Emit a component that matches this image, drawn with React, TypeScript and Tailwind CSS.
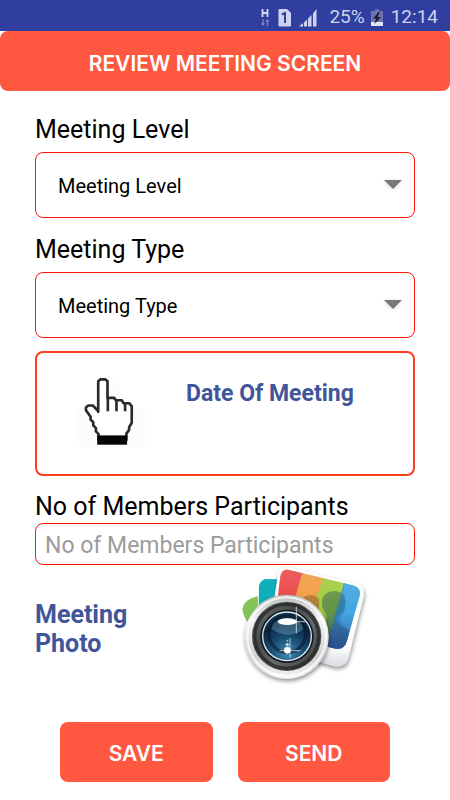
import { useState } from "react";

const SignalIcons = () => (
  <div className="flex items-center gap-2">
    <svg className="h-[19px] w-[9px]" viewBox="0 0 9 19" fill="none" aria-hidden="true">
      <path d="M1.5 1v8M6.5 1v8M1.5 5h5" stroke="#d5d8f0" strokeWidth="1.8" />
      <path d="M2 11v6M0.5 15l1.5 2 1.5-2M6.500 18v-6M5 14l1.500-2L8 14" stroke="#7f87c6" strokeWidth="1.2" />
    </svg>
    <svg className="h-[19px] w-[13px]" viewBox="0 0 13 19" aria-hidden="true">
      <path d="M1.500 1H9l4 4v12.500a1 1 0 0 1-1 1H1.500a1 1 0 0 1-1-1V2a1 1 0 0 1 1-1z" fill="#cfd2ef" />
      <path d="M4 6.500l3-1.500v10" fill="none" stroke="#303e9f" strokeWidth="2" />
    </svg>
    <svg className="h-[19px] w-[18px]" viewBox="0 0 18 19" fill="#cfd2ef" aria-hidden="true">
      <path d="M0 18.500L4 15v3.500zM5 14.500l3-3v7H5zM9 10.500l3.500-3.500v11.500H9zM14 5.500L17.500 1v17.500H14z" />
    </svg>
  </div>
);

const BatteryIcon = () => (
  <svg className="h-[18px] w-[12px]" viewBox="0 0 12 18" aria-hidden="true">
    <path d="M4 0h4v2h4v12H0V2h4z" fill="#6d74b4" />
    <path d="M0 13h12v4H0z" fill="#e3e5f7" />
    <path d="M7.500 3L2 9.500h3L3.500 15 10 8H6.500L9 3z" fill="#1d2030" />
  </svg>
);

const HandIcon = () => (
  <svg className="h-[73px] w-[73px]" viewBox="130 105 220 220" aria-hidden="true">
    <path d="M132 205h216v118H132zM200 112h70v95h-70z" fill="#fcfcfc" />
    <path
      d="M206 216V124l7-6h14l7 6v50h20l5 7h18l5 9h17l8 9v50l-8 14v8l-8 10v20h-84v-18l-8-8v-10l-8-8v-10l-8-8v-8l-14-20v-8l7-6h14l15 16z"
      fill="#fff"
      stroke="#2a2a2a"
      strokeWidth="8"
      strokeLinejoin="round"
    />
    <path d="M235 172v42M261 181v33M287 190v24" stroke="#2a2a2a" strokeWidth="8" />
    <path d="M203 287h90v28h-90z" fill="#050505" />
  </svg>
);

const CameraIcon = () => (
  <svg className="h-[122px] w-[130px]" viewBox="45 18 390 366" aria-hidden="true">
    <defs>
      <linearGradient id="ring" x1="0" y1="0" x2="0" y2="1">
        <stop offset="0" stopColor="#bdbdbd" />
        <stop offset="0.3" stopColor="#f5f5f5" />
        <stop offset="0.75" stopColor="#d0d0d0" />
        <stop offset="1" stopColor="#f7f7f7" />
      </linearGradient>
      <linearGradient id="barrel" x1="0" y1="0" x2="1" y2="1">
        <stop offset="0" stopColor="#777b7b" />
        <stop offset="0.35" stopColor="#444848" />
        <stop offset="0.6" stopColor="#686b6b" />
        <stop offset="1" stopColor="#303333" />
      </linearGradient>
      <radialGradient id="glass" cx="0.5" cy="0.85" r="0.85">
        <stop offset="0" stopColor="#3f8ab3" />
        <stop offset="0.4" stopColor="#194c72" />
        <stop offset="0.75" stopColor="#0b2440" />
        <stop offset="1" stopColor="#183b57" />
      </radialGradient>
      <linearGradient id="shade" x1="0" y1="0" x2="0" y2="1">
        <stop offset="0" stopColor="#fff" stopOpacity="0.15" />
        <stop offset="0.45" stopColor="#fff" stopOpacity="0" />
        <stop offset="0.5" stopColor="#20207c" stopOpacity="0" />
        <stop offset="0.9" stopColor="#20207c" stopOpacity="0.5" />
      </linearGradient>
      <linearGradient id="card" x1="0" y1="0" x2="0" y2="1">
        <stop offset="0.8" stopColor="#fff" />
        <stop offset="1" stopColor="#d9dbe0" />
      </linearGradient>
      <clipPath id="photo">
        <path d="M190 29L384 76Q408 83 405 105L365 245Q357 270 331 266L145 218 166 48Q172 25 190 29z" />
      </clipPath>
      <filter id="drop" x="-20%" y="-20%" width="140%" height="140%">
        <feDropShadow dx="2" dy="7" stdDeviation="6" floodOpacity="0.45" />
      </filter>
    </defs>
    <path d="M101 106Q55 117 51 145Q51 169 72 194L145 150z" fill="#83c657" stroke="#fff" strokeWidth="3" />
    <path d="M158 56L119 56Q101 63 100 83V155l45-15z" fill="#12afba" stroke="#fff" strokeWidth="3" />
    <path
      d="M192 23L391 70Q420 78 416 108L370 294Q361 324 328 319L230 290 145 218 158 46Q166 18 192 23z"
      fill="url(#card)"
      filter="url(#drop)"
    />
    <g clipPath="url(#photo)">
      <path d="M140 15h103L180 270h-50z" fill="#eb4547" />
      <path d="M236 25l65 20-64 230-70-15z" fill="#f29b43" />
      <path d="M297 40l67 20-61 230-76-20z" fill="#a5cb3e" />
      <path d="M361 55l70 20-45 215-90-10z" fill="#45a7e0" />
      <path
        d="M238 110q13-8 27-4q20 5 18 27q0 17-12 27l-6 13 10 21-10 46-60-80z"
        fill="#a8702d"
        opacity="0.75"
      />
      <path
        d="M299 105q12-14 34-12q28 5 27 33q-1 19-11 33c-15 10-19 17-15 26 12 18 38 23 38 38l-18 60-100-15 10-60q27-18 42-32q-1-12-9-24c-8-13-10-34 2-47z"
        fill="#386e52"
        opacity="0.6"
      />
      <path d="M361 55l-52 210 60 10 15-50c-2-15-25-20-34-35-10-14-3-23 6-31 8-12 10-44-2-60z" fill="#2b76bd" opacity="0.5" />
      <path d="M140 15h290v280H140z" fill="url(#shade)" />
    </g>
    <circle cx="185" cy="230" r="126" fill="url(#ring)" filter="url(#drop)" />
    <circle cx="185" cy="230" r="118" fill="none" stroke="#fff" strokeWidth="6" opacity="0.8" />
    <circle cx="185" cy="229" r="104" fill="url(#barrel)" />
    <circle cx="185" cy="229" r="96" fill="none" stroke="#242727" strokeWidth="10" opacity="0.75" />
    <circle cx="186" cy="229" r="80" fill="#111820" />
    <circle cx="186" cy="229" r="73" fill="url(#glass)" stroke="#dcecf4" strokeWidth="4" />
    <circle cx="187" cy="222" r="55" fill="none" stroke="#07182a" strokeWidth="10" opacity="0.55" />
    <path d="M139 207q7-32 48-32t48 32q-42 35-96 0z" fill="#7eb8d4" opacity="0.35" />
    <ellipse cx="187" cy="185" rx="29" ry="10" fill="#fff" />
    <path d="M214 140v80M176 185h66M195 235v58M164 272h62" stroke="#fff" strokeWidth="2.500" opacity="0.8" />
    <circle cx="187" cy="271" r="10" fill="#fff" />
    <circle cx="187" cy="254" r="5" fill="#b8def1" />
    <circle cx="187" cy="242" r="3" fill="#84bad7" />
  </svg>
);

type SelectFieldProps = {
  id: string;
  label: string;
};

const SelectField = ({ id, label }: SelectFieldProps) => (
  <div className="flex flex-col gap-1.5">
    <label htmlFor={id} className="text-[25px] leading-8">
      {label}
    </label>
    <div className="relative">
      <select
        id={id}
        className="block h-[66px] w-full appearance-none rounded-lg border border-[#ff1408] bg-white pt-0.5 pr-12 pl-[22px] text-[20px]"
      >
        <option>{label}</option>
      </select>
      <svg
        className="pointer-events-none absolute top-[27px] right-3 h-3 w-5 drop-shadow-sm"
        viewBox="0 0 20 12"
        aria-hidden="true"
      >
        <path d="M1 1h18l-9 9z" fill="#787878" />
      </svg>
    </div>
  </div>
);

export default function App() {
  const [members, setMembers] = useState("");

  return (
    <div className="min-h-screen bg-white font-['Roboto',sans-serif] text-black">
      <div className="flex h-[31px] items-center justify-end gap-3 bg-[#303e9f] pt-1 pr-3 text-[19px] text-[#cfd2ef]">
        <SignalIcons />
        <div className="flex items-center gap-1.5">
          <span>25%</span>
          <BatteryIcon />
        </div>
        <span className="-ml-1">12:14</span>
      </div>

      <h1 className="flex h-[60px] items-center justify-center rounded-lg bg-[#ff5740] pt-1.5 font-['Inter',sans-serif] text-[21px] font-semibold text-white">
        REVIEW MEETING SCREEN
      </h1>

      <form className="px-[35px] pt-[23px]" onSubmit={(e) => e.preventDefault()}>
        <div className="flex flex-col gap-4">
          <SelectField id="meeting-level" label="Meeting Level" />
          <SelectField id="meeting-type" label="Meeting Type" />
        </div>

        <button
          type="button"
          className="mt-[13px] flex h-[125px] w-full items-start rounded-lg border-2 border-[#ff3f1c] pt-[22px] pl-9"
        >
          <HandIcon />
          <span className="ml-10 pt-1 text-[23px] leading-[30px] font-bold text-[#40559a]">Date Of Meeting</span>
        </button>

        <label htmlFor="members" className="mt-[15px] block text-[25px] leading-8">
          No of Members Participants
        </label>
        <input
          id="members"
          value={members}
          onChange={(e) => setMembers(e.target.value)}
          placeholder="No of Members Participants"
          className="block h-[42px] w-full rounded-lg border border-[#ff1408] px-[9px] pt-0.5 text-[23px] placeholder:text-[#9c9c9c]"
        />

        <button type="button" className="mt-px flex w-full items-center justify-between pr-[45px] text-left">
          <span className="w-[120px] pt-1 text-[25px] leading-[29px] font-bold text-[#40559a]">Meeting Photo</span>
          <CameraIcon />
        </button>

        <div className="mt-[34px] flex gap-[25px] px-[25px] font-['Inter',sans-serif] text-[21px] font-semibold text-white">
          <button type="button" className="h-[60px] flex-1 rounded-lg bg-[#ff5740] pt-1">
            SAVE
          </button>
          <button type="submit" className="h-[60px] flex-1 rounded-lg bg-[#ff5740] pt-1">
            SEND
          </button>
        </div>
      </form>
    </div>
  );
}
